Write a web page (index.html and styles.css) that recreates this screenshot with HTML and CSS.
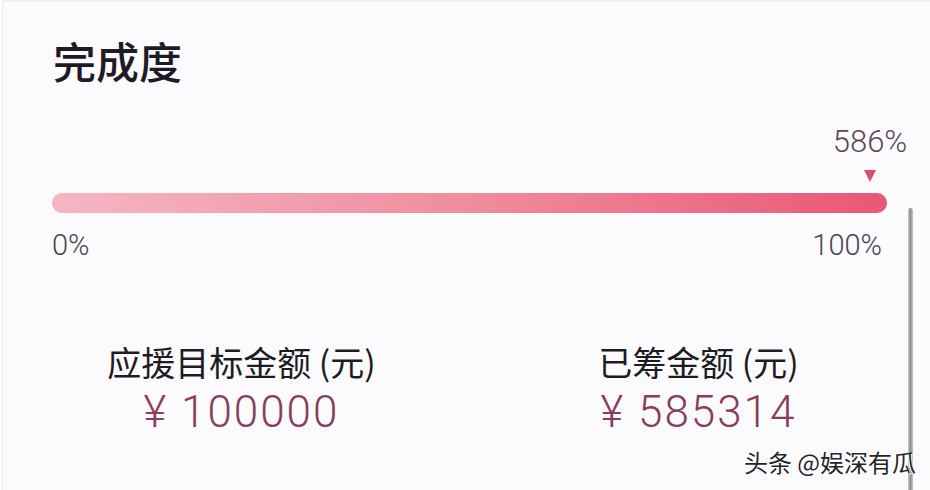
FILE: index.html
```html
<!DOCTYPE html>
<html lang="zh-CN">
<head>
    <meta charset="UTF-8" />
    <meta name="viewport" content="width=device-width, initial-scale=1" />
    <title>完成度</title>
    <link rel="stylesheet" href="styles.css">
</head>
<body>
    <main class="card">
        <h1 class="title">完成度</h1>

        <section class="progress" aria-label="完成度">
            <div class="marker">
                <span class="marker-value">586%</span>
                <span class="marker-arrow"></span>
            </div>
            <div class="track">
                <div class="fill" style="width: 100%"></div>
            </div>
            <div class="scale">
                <span>0%</span>
                <span>100%</span>
            </div>
        </section>

        <section class="totals">
            <div class="stat">
                <div class="stat-label">应援目标金额 (元)</div>
                <div class="stat-value">¥ 100000</div>
            </div>
            <div class="stat">
                <div class="stat-label">已筹金额 (元)</div>
                <div class="stat-value">¥ 585314</div>
            </div>
        </section>

        <div class="scrollbar"></div>
        <div class="watermark">头条 @娱深有瓜</div>
    </main>
</body>
</html>
```

FILE: styles.css
```css
*, *::before, *::after {
    box-sizing: border-box;
}

body {
    margin: 0;
    background: #ffffff;
    font-family: "Noto Sans CJK SC", "Noto Sans", sans-serif;
    color: #1f1b26;
}

.card {
    position: relative;
    width: 930px;
    height: 490px;
    overflow: hidden;
    margin-left: 2px;
    padding-top: 37px;
    background: #fbfafd;
    border-top: 2px solid #f0eff3;
    border-left: 1px solid #e9e8ed;
}

.title {
    margin: 0 0 0 50px;
    font-size: 43px;
    line-height: 1;
    font-weight: 500;
    color: #1f1b26;
}

/* progress bar */
.progress {
    margin-top: 44px;
    padding: 0 45px 0 49px;
}

.marker {
    display: flex;
    flex-direction: column;
    align-items: center;
    width: 76px;
    margin-left: auto;
    margin-right: -21px;
}

.marker-value {
    font-family: Roboto, "Noto Sans", sans-serif;
    font-weight: 300;
    font-size: 31px;
    line-height: 1;
    color: #5e4656;
}

.marker-arrow {
    margin-top: 13px;
    width: 0;
    height: 0;
    border-left: 6px solid transparent;
    border-right: 6px solid transparent;
    border-top: 12px solid #d9506c;
}

.track {
    margin-top: 11px;
    height: 20px;
    border-radius: 10px;
    background: #f6dbe1;
}

.fill {
    height: 100%;
    border-radius: 10px;
    background: linear-gradient(90deg, #f5b6c3 0%, #f08c9f 50%, #ea5774 100%);
}

.scale {
    display: flex;
    justify-content: space-between;
    margin-top: 18px;
    padding-right: 5px;
    font-family: Roboto, "Noto Sans", sans-serif;
    font-weight: 300;
    font-size: 29px;
    line-height: 1;
    color: #4a4550;
}

/* totals */
.totals {
    display: grid;
    grid-template-columns: 457px 457px;
    margin: 85px 0 0 10px;
}

.stat {
    display: flex;
    flex-direction: column;
    align-items: center;
}

.stat-label {
    font-size: 34px;
    line-height: 1;
    color: #1e1b22;
}

.stat-value {
    margin-top: 11px;
    font-family: Roboto, "Noto Sans", sans-serif;
    font-weight: 300;
    font-size: 44px;
    line-height: 1;
    letter-spacing: 2px;
    color: #8a3d5a;
}

.scrollbar {
    position: absolute;
    top: 206px;
    left: 905px;
    width: 5px;
    height: 300px;
    border-radius: 3px;
    background: linear-gradient(90deg, #c9c9cc, #8f8f93 50%, #c9c9cc);
}

.watermark {
    position: absolute;
    right: 16px;
    top: 448px;
    font-size: 24px;
    line-height: 1;
    color: #262428;
    text-shadow: 1px 1px 0 #ffffff, -1px 0 0 #ffffff;
}
```
